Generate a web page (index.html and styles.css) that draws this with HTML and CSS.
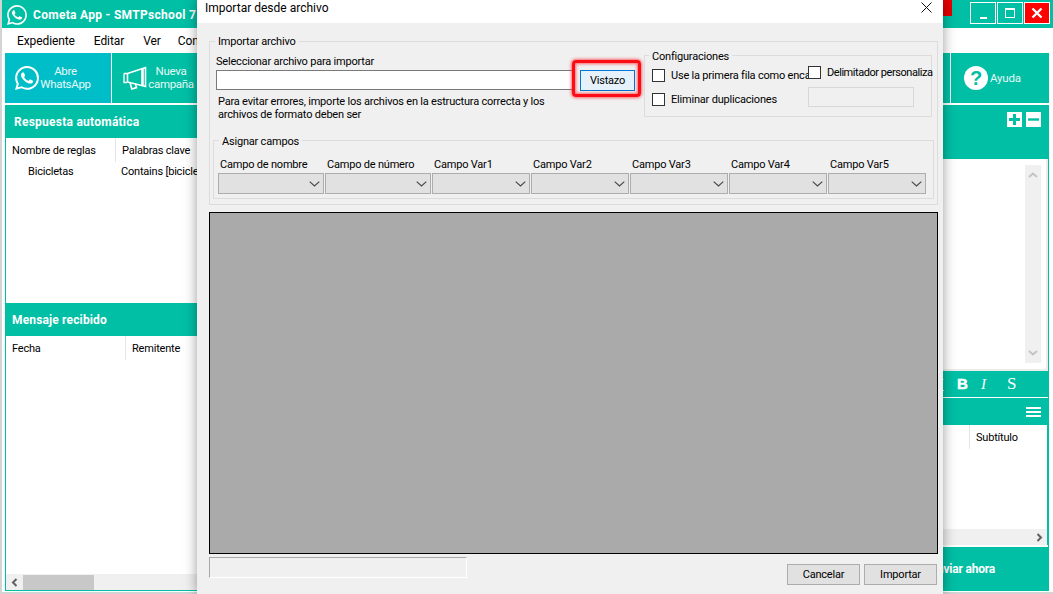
FILE: index.html
```html
<!DOCTYPE html>
<html lang="es">
<head>
<meta charset="utf-8">
<title>Cometa App</title>
<link rel="stylesheet" href="styles.css">
</head>
<body>
<svg class="defs" width="0" height="0" aria-hidden="true">
  <symbol id="wa" viewBox="0 0 24 24"><path fill="currentColor" d="M17.472 14.382c-.297-.149-1.758-.867-2.03-.967-.273-.099-.471-.148-.67.15-.197.297-.767.966-.94 1.164-.173.199-.347.223-.644.075-.297-.15-1.255-.463-2.39-1.475-.883-.788-1.48-1.761-1.653-2.059-.173-.297-.018-.458.13-.606.134-.133.298-.347.446-.52.149-.174.198-.298.298-.497.099-.198.05-.371-.025-.52-.075-.149-.669-1.612-.916-2.207-.242-.579-.487-.5-.669-.51-.173-.008-.371-.01-.57-.01-.198 0-.52.074-.792.372-.272.297-1.04 1.016-1.04 2.479 0 1.462 1.065 2.875 1.213 3.074.149.198 2.096 3.2 5.077 4.487.709.306 1.262.489 1.694.625.712.227 1.36.195 1.871.118.571-.085 1.758-.719 2.006-1.413.248-.694.248-1.289.173-1.413-.074-.124-.272-.198-.57-.347m-5.421 7.403h-.004a9.87 9.87 0 01-5.031-1.378l-.361-.214-3.741.982.998-3.648-.235-.374a9.86 9.86 0 01-1.51-5.26c.001-5.45 4.436-9.884 9.888-9.884 2.64 0 5.122 1.03 6.988 2.898a9.825 9.825 0 012.893 6.994c-.003 5.45-4.437 9.884-9.885 9.884m8.413-18.297A11.815 11.815 0 0012.05 0C5.495 0 .16 5.335.157 11.892c0 2.096.547 4.142 1.588 5.945L.057 24l6.305-1.654a11.882 11.882 0 005.683 1.448h.005c6.554 0 11.89-5.335 11.893-11.893a11.821 11.821 0 00-3.48-8.413z"/></symbol>
  <symbol id="chev" viewBox="0 0 11 6"><path d="M.7.7 5.5 5 10.3.7" fill="none" stroke="#444" stroke-width="1.1"/></symbol>
</svg>

<div class="app">
  <header class="titlebar">
    <svg class="title-logo"><use href="#wa"/></svg>
    <span class="app-name">Cometa App - SMTPschool 7.</span>
    <span class="red-tab"></span>
    <div class="win-controls">
      <span class="win-btn"><i class="min-glyph"></i></span>
      <span class="win-btn"><i class="max-glyph"></i></span>
      <span class="win-btn win-close"><svg width="12" height="12" viewBox="0 0 12 12"><path d="M1.5 1.5l9 9M10.5 1.5l-9 9" stroke="#fff" stroke-width="2.4"/></svg></span>
    </div>
  </header>

  <nav class="menubar">
    <span class="menu-a">Expediente</span>
    <span class="menu-b">Editar</span>
    <span class="menu-c">Ver</span>
    <span class="menu-d">Con</span>
  </nav>

  <div class="toolbar">
    <div class="tool tool-cyan">
      <svg class="tool-icon"><use href="#wa"/></svg>
      <span class="tool-text">Abre<br>WhatsApp</span>
    </div>
    <div class="tool tool-second">
      <svg class="tool-icon" viewBox="0 0 24 24" fill="none" stroke="currentColor" stroke-width="1.6">
        <path d="M4.5 7.5 22.5 1.5V20.5L4.5 16Z"/>
        <path d="M19.5 3V19.5" stroke-width="2.6"/>
        <path d="M1 7.5H4M1 7.5V16.5H4" stroke-width="1.3"/>
        <path d="M7 16.5 8.8 23 13.5 21.6 12.4 17.6"/>
      </svg>
      <span class="tool-text">Nueva<br>campaña</span>
    </div>
    <div class="tool tool-help">
      <span class="help-icon">?</span>
      <span class="help-text">Ayuda</span>
    </div>
  </div>

  <main class="workspace">
    <section class="left-panel">
      <h2 class="panel-head head-rules">Respuesta automática</h2>
      <div class="rules">
        <div class="col-heads">
          <span class="col-rule">Nombre de reglas</span>
          <span class="col-key">Palabras clave</span>
        </div>
        <div class="rule-row">
          <span class="cell-rule">Bicicletas</span>
          <span class="cell-key">Contains [bicicle</span>
        </div>
      </div>
      <h2 class="panel-head">Mensaje recibido</h2>
      <div class="messages">
        <div class="col-heads">
          <span class="col-date">Fecha</span>
          <span class="col-from">Remitente</span>
        </div>
      </div>
      <div class="hscroll">
        <svg class="scroll-arrow" width="7" height="9" viewBox="0 0 7 9"><path d="M5.5 1 2 4.5 5.5 8" fill="none" stroke="#606060" stroke-width="2"/></svg>
        <span class="hthumb"></span>
      </div>
    </section>

    <section class="right-panel">
      <div class="right-head">
        <span class="square-btn"><svg width="11" height="11" viewBox="0 0 11 11"><path d="M5.5 0v11M0 5.5h11" stroke="#00bfa5" stroke-width="3"/></svg></span>
        <span class="square-btn"><svg width="11" height="11" viewBox="0 0 11 11"><path d="M0 5.5h11" stroke="#00bfa5" stroke-width="2.4"/></svg></span>
      </div>
      <div class="editor">
        <div class="vscroll">
          <svg width="10" height="6" viewBox="0 0 10 6"><path d="M1 5 5 1.5 9 5" fill="none" stroke="#c4c4c4" stroke-width="2"/></svg>
          <svg width="10" height="6" viewBox="0 0 10 6"><path d="M1 1 5 4.5 9 1" fill="none" stroke="#c4c4c4" stroke-width="2"/></svg>
        </div>
      </div>
      <div class="format-bar">
        <span class="fmt-u">U</span>
        <span class="fmt-b">B</span>
        <span class="fmt-i">I</span>
        <span class="fmt-s">S</span>
      </div>
      <div class="list-head">
        <span class="burger"></span>
      </div>
      <div class="list-body">
        <span class="col-sub">Subtítulo</span>
      </div>
      <div class="hscroll hscroll-right">
        <svg width="7" height="9" viewBox="0 0 7 9"><path d="M1.5 1 5 4.5 1.5 8" fill="none" stroke="#606060" stroke-width="2"/></svg>
      </div>
      <div class="send-btn">Enviar ahora</div>
    </section>
  </main>
</div>

<div class="dialog">
  <div class="dialog-title">
    <span>Importar desde archivo</span>
    <svg class="dialog-x" width="11" height="11" viewBox="0 0 11 11"><path d="M.5.5l10 10M10.5.5l-10 10" stroke="#111" stroke-width="1"/></svg>
  </div>
  <div class="dialog-body">
    <div class="group group-import">
      <span class="legend legend-import">Importar archivo</span>
      <div class="import-row">
        <div class="file-col">
          <div class="field-label">Seleccionar archivo para importar</div>
          <div class="file-line">
            <span class="file-input"></span>
            <span class="browse-btn">Vistazo</span>
          </div>
          <p class="help-note">Para evitar errores, importe los archivos en la estructura correcta y los archivos de formato deben ser</p>
        </div>
        <div class="group group-config">
          <span class="legend legend-config">Configuraciones</span>
          <div class="config-left">
            <label class="check check-first"><i class="box"></i><span>Use la primera fila como enca</span></label>
            <label class="check check-dup"><i class="box"></i><span>Eliminar duplicaciones</span></label>
          </div>
          <div class="config-right">
            <label class="check check-delim"><i class="box"></i><span>Delimitador personaliza</span></label>
            <span class="delim-input"></span>
          </div>
        </div>
      </div>
      <div class="group group-assign">
        <span class="legend legend-assign">Asignar campos</span>
        <div class="field-grid">
          <div class="field"><span>Campo de nombre</span><div class="select"><svg><use href="#chev"/></svg></div></div>
          <div class="field"><span>Campo de número</span><div class="select"><svg><use href="#chev"/></svg></div></div>
          <div class="field"><span>Campo Var1</span><div class="select"><svg><use href="#chev"/></svg></div></div>
          <div class="field"><span>Campo Var2</span><div class="select"><svg><use href="#chev"/></svg></div></div>
          <div class="field"><span>Campo Var3</span><div class="select"><svg><use href="#chev"/></svg></div></div>
          <div class="field"><span>Campo Var4</span><div class="select"><svg><use href="#chev"/></svg></div></div>
          <div class="field"><span>Campo Var5</span><div class="select"><svg><use href="#chev"/></svg></div></div>
        </div>
      </div>
    </div>
    <div class="preview"></div>
    <div class="dialog-foot">
      <span class="progress"></span>
      <div class="foot-btns">
        <span class="foot-btn">Cancelar</span>
        <span class="foot-btn">Importar</span>
      </div>
    </div>
  </div>
</div>
</body>
</html>
```
FILE: styles.css
```css
* { box-sizing: border-box; }
html, body { margin: 0; padding: 0; }
body {
  width: 1053px;
  height: 594px;
  overflow: hidden;
  position: relative;
  background: #fff;
  font: 11px/16px Roboto, "Liberation Sans", sans-serif;
  letter-spacing: -.2px;
  color: #000;
}
.defs { position: absolute; }
.app {
  height: 594px;
  display: flex;
  flex-direction: column;
  border-left: 2px solid #d4d4d4;
  border-bottom: 2px solid #d4d4d4;
}

/* title bar */
.titlebar {
  height: 28px;
  flex: none;
  display: flex;
  background: #00bfa5;
  color: #fff;
}
.title-logo { width: 20px; height: 20px; margin: 5px 0 0 5px; color: #fff; }
.app-name { font: 700 12px/30px Roboto, sans-serif; letter-spacing: .3px; margin-left: 6px; white-space: nowrap; }
.red-tab { width: 60px; height: 16px; background: #e60000; margin-left: auto; margin-right: 18px; }
.win-controls { display: flex; gap: 1px; margin: 2px 3px 0 0; }
.win-btn {
  width: 26px;
  height: 22px;
  border: 1px solid #fff;
  display: flex;
  align-items: center;
  justify-content: center;
}
.win-close { background: #f00; }
.min-glyph { width: 7px; height: 2px; background: #fff; margin-top: 9px; }
.max-glyph { width: 10px; height: 10px; border: 1px solid #fff; border-top-width: 2px; }

/* menu */
.menubar {
  height: 25px;
  flex: none;
  display: flex;
  align-items: center;
  white-space: nowrap;
  font-size: 12px;
  letter-spacing: -.1px;
}
.menu-a { margin-left: 15px; }
.menu-b { margin-left: 19px; }
.menu-c { margin-left: 19px; }
.menu-d { margin-left: 17px; }

/* toolbar */
.toolbar {
  height: 50px;
  flex: none;
  margin: 0 4px 0 3px;
  display: flex;
  background: #00bfa5;
  color: #e6f8f6;
}
.tool { display: flex; align-items: center; font-size: 11.5px; }
.tool-icon { width: 24px; height: 24px; flex: none; color: #fff; }
.tool-text { text-align: center; line-height: 13px; display: block; letter-spacing: -.3px; }
.tool-cyan {
  width: 106px;
  background: #00bec8;
  padding-left: 10px;
}
.tool-cyan .tool-text { width: 53px; }
.tool-second {
  width: 120px;
  padding-left: 11px;
  border-left: 1px solid #fff;
}
.tool-second .tool-text { width: 48px; }
.tool-help {
  width: 99px;
  margin-left: auto;
  border-left: 1px solid #fff;
  padding-left: 13px;
}
.help-icon {
  width: 24px;
  height: 24px;
  border-radius: 50%;
  background: #fff;
  color: #00bfa5;
  font: 700 20px/24px "Liberation Sans", sans-serif;
  text-align: center;
  flex: none;
}
.help-text { margin-left: 2px; }

/* workspace */
.workspace {
  flex: 1;
  min-height: 0;
  margin: 2px 4px 1px 3px;
  display: flex;
  justify-content: space-between;
}
.left-panel {
  width: 400px;
  display: flex;
  flex-direction: column;
  border-left: 1px solid #00bfa5;
  border-bottom: 1px solid #00bfa5;
}
.panel-head {
  height: 33px;
  flex: none;
  margin: 0;
  padding-left: 6px;
  background: #00bfa5;
  color: #fff;
  font: 700 12px/35px Roboto, sans-serif;
  letter-spacing: .15px;
}
.head-rules { padding-left: 8px; letter-spacing: .25px; }
.rules { height: 165px; flex: none; }
.messages { flex: 1; }
.col-heads { display: flex; height: 24px; line-height: 26px; }
.col-rule { width: 110px; padding-left: 6px; border-right: 1px solid #e5e5e5; }
.col-key { padding-left: 6px; }
.col-date { width: 120px; padding-left: 6px; border-right: 1px solid #e5e5e5; }
.col-from { padding-left: 6px; }
.rule-row { display: flex; white-space: nowrap; line-height: 19px; }
.cell-rule { width: 115px; padding-left: 22px; }
.hscroll {
  height: 16px;
  flex: none;
  background: #f0f0f0;
  display: flex;
  align-items: center;
}
.scroll-arrow { margin-left: 5px; }
.hthumb { width: 71px; height: 15px; background: #c8c8c8; margin-left: 5px; }

.right-panel {
  width: 400px;
  display: flex;
  flex-direction: column;
  border-right: 1px solid #00bfa5;
}
.right-head {
  height: 54px;
  flex: none;
  background: #00bfa5;
  display: flex;
  justify-content: flex-end;
  align-items: flex-start;
  gap: 4px;
  padding: 7px 7px 0 0;
}
.square-btn {
  width: 15px;
  height: 15px;
  background: #fff;
  display: flex;
  align-items: center;
  justify-content: center;
}
.editor {
  height: 212px;
  flex: none;
  background: #fff;
  border-right: 2px solid #ececec;
  border-bottom: 2px solid #ececec;
  padding: 6px 5px 6px 0;
  display: flex;
  justify-content: flex-end;
}
.vscroll {
  width: 16px;
  background: #f0f0f0;
  display: flex;
  flex-direction: column;
  justify-content: space-between;
  align-items: center;
  padding: 7px 0;
}
.format-bar {
  height: 26px;
  flex: none;
  background: #00bfa5;
  color: #fff;
  display: flex;
  padding-left: 284px;
  letter-spacing: 0;
}
.fmt-u { width: 24px; font: 400 15px/26px "Liberation Serif", serif; text-decoration: underline; }
.fmt-b { width: 24px; font: 700 15px/26px "Liberation Sans", sans-serif; -webkit-text-stroke: .5px #fff; }
.fmt-i { width: 26px; font: italic 400 15px/26px "Liberation Serif", serif; }
.fmt-s { font: 400 17px/26px "Liberation Serif", serif; }
.list-head {
  height: 27px;
  flex: none;
  margin-top: 1px;
  background: #00bfa5;
  display: flex;
  justify-content: flex-end;
  align-items: center;
  padding-right: 7px;
}
.burger {
  width: 15px;
  height: 10px;
  border-top: 2px solid #fff;
  border-bottom: 2px solid #fff;
  background: linear-gradient(#fff, #fff) center / 100% 2px no-repeat;
}
.list-body {
  height: 104px;
  flex: none;
  padding-left: 320px;
  border-right: 1px solid #00bfa5;
}
.col-sub {
  display: block;
  width: 70px;
  height: 24px;
  line-height: 26px;
  border-left: 1px solid #e5e5e5;
  padding-left: 6px;
}
.hscroll-right { justify-content: flex-end; padding-right: 4px; border-right: 1px solid #00bfa5; }
.send-btn {
  height: 44px;
  flex: none;
  margin-top: 2px;
  background: #00bfa5;
  color: #fff;
  font: 700 12px/44px Roboto, sans-serif;
  text-align: right;
  padding-right: 53px;
}

/* dialog (floating window) */
.dialog {
  position: absolute;
  left: 197px;
  top: 0;
  width: 746px;
  height: 594px;
  background: #f0f0f0;
  box-shadow: 0 0 12px rgba(0, 0, 0, .4);
}
.dialog-title {
  height: 23px;
  background: #fff;
  display: flex;
  justify-content: space-between;
  align-items: flex-start;
  padding: 0 11px 0 8px;
  font: 12px/16px Roboto, sans-serif;
  letter-spacing: 0;
}
.dialog-x { margin-top: 2px; }
.dialog-body { padding: 18px 5px 0 12px; }
.group { position: relative; border: 1px solid #dcdcdc; }
.legend {
  position: absolute;
  top: -8px;
  background: #f0f0f0;
  padding: 0 3px;
  white-space: nowrap;
  line-height: 16px;
}
.legend-import { left: 5px; }
.legend-config { left: 4px; top: -7px; }
.legend-assign { left: 5px; top: -7px; }
.group-import { height: 164px; width: 729px; }
.import-row { display: flex; height: 79px; }
.file-col { width: 427px; margin-left: 6px; padding-top: 11px; flex: none; }
.field-label { height: 16px; line-height: 18px; }
.file-line { display: flex; gap: 7px; margin-top: 1px; }
.file-input { width: 357px; height: 20px; background: #fff; border: 1px solid #7a7a7a; }
.browse-btn {
  position: relative;
  width: 55px;
  height: 21px;
  background: #e5f1fb;
  border: 1px solid #0078d7;
  text-align: center;
  line-height: 20px;
}
.browse-btn::after {
  content: "";
  position: absolute;
  inset: -11px -7px -7px -9px;
  border: 3px solid #fb0d16;
  border-radius: 4px;
  box-shadow: 0 0 3px 1px rgba(255, 30, 40, .65), inset 0 0 3px 1px rgba(255, 30, 40, .65);
}
.help-note { margin: 4px 0 0 2px; width: 345px; line-height: 13px; }
.group-config {
  flex: none;
  width: 288px;
  height: 62px;
  margin: 13px 0 0 1px;
  display: flex;
}
.config-left { width: 163px; flex: none; }
.config-right { width: 123px; flex: none; }
.check { display: flex; align-items: center; white-space: nowrap; }
.check span { padding-top: 2px; }
.check-delim span { letter-spacing: -.45px; }
.box {
  width: 13px;
  height: 13px;
  background: #fff;
  border: 1px solid #333;
  flex: none;
  margin-right: 6px;
}
.check-first { margin: 10px 0 0 7px; }
.check-dup { margin: 6px 0 0 7px; }
.check-delim { margin-top: 7px; }
.delim-input {
  display: block;
  width: 106px;
  height: 20px;
  margin-top: 6px;
  border: 1px solid #d8d8d8;
  background: #f0f0f0;
}
.group-assign { width: 721px; height: 59px; margin: 19px 0 0 3px; padding: 15px 0 0 4px; }
.field-grid {
  display: grid;
  grid-template-columns: 106px 106px repeat(5, 98px);
  column-gap: 1px;
}
.field span { display: block; padding-left: 2px; height: 16px; line-height: 18px; white-space: nowrap; }
.select {
  height: 21px;
  margin-top: 1px;
  background: #e1e1e1;
  border: 1px solid #adadad;
  display: flex;
  align-items: center;
  justify-content: flex-end;
  padding-right: 3px;
}
.select svg { width: 11px; height: 6px; }
.preview { height: 342px; width: 729px; margin-top: 7px; background: #aaa; border: 1px solid #000; }
.dialog-foot { display: flex; justify-content: space-between; width: 728px; }
.progress {
  width: 258px;
  height: 21px;
  margin-top: 3px;
  border: 1px solid #a8a8a8;
  border-right-color: #fff;
  border-bottom-color: #fff;
}
.foot-btns { display: flex; gap: 4px; margin-top: 10px; }
.foot-btn {
  width: 73px;
  height: 21px;
  background: #e1e1e1;
  border: 1px solid #adadad;
  text-align: center;
  line-height: 20px;
}
```
